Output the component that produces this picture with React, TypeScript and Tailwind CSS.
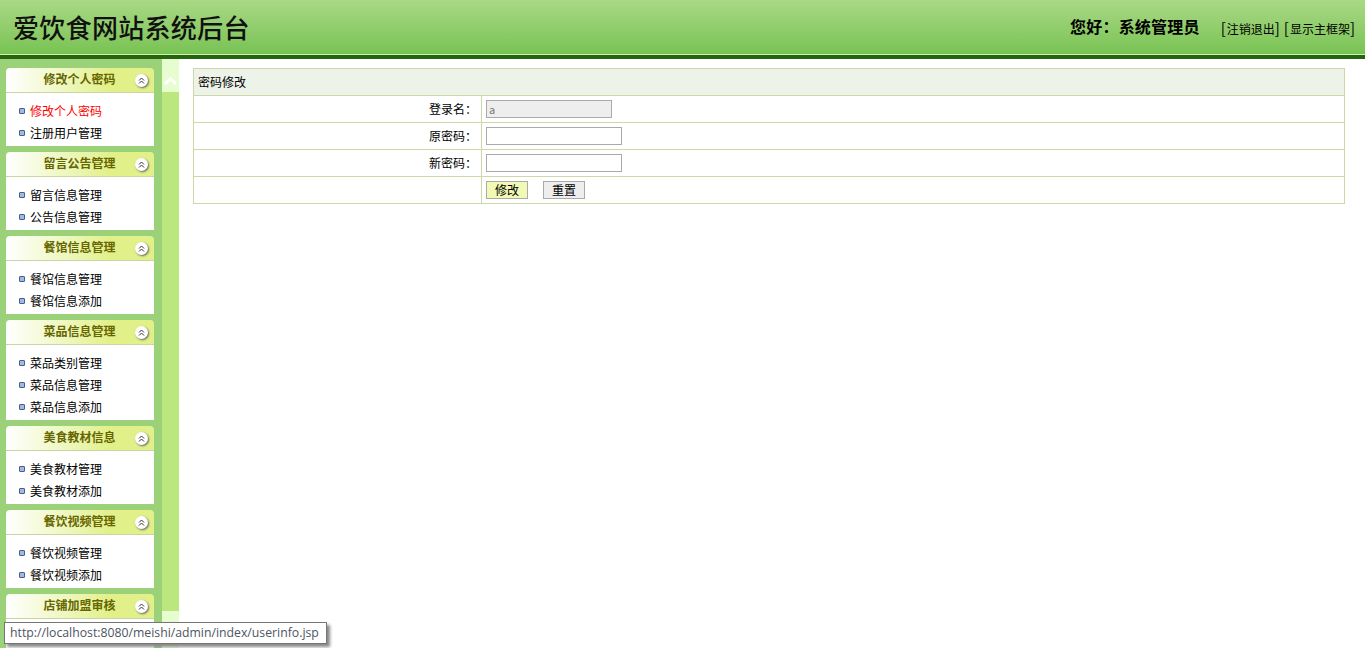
import React from "react";

const cjk = "font-['Noto_Sans_CJK_SC',sans-serif]";

const menus = [
  { title: "修改个人密码", items: ["修改个人密码", "注册用户管理"] },
  { title: "留言公告管理", items: ["留言信息管理", "公告信息管理"] },
  { title: "餐馆信息管理", items: ["餐馆信息管理", "餐馆信息添加"] },
  { title: "菜品信息管理", items: ["菜品类别管理", "菜品信息管理", "菜品信息添加"] },
  { title: "美食教材信息", items: ["美食教材管理", "美食教材添加"] },
  { title: "餐饮视频管理", items: ["餐饮视频管理", "餐饮视频添加"] },
  { title: "店铺加盟审核", items: [] },
];

function Chevrons() {
  return (
    <span className="ml-[2px] flex h-[13px] w-[13px] items-center justify-center rounded-full bg-white shadow-[1px_1px_2px_#666]">
      <svg width="9" height="9" viewBox="0 0 9 9" fill="none" stroke="#333" strokeWidth="1">
        <path d="M2 4.5 4.5 2 7 4.5M2 7.5 4.5 5 7 7.5" />
      </svg>
    </span>
  );
}

function MenuCard({ title, items, first }: { title: string; items: string[]; first: boolean }) {
  return (
    <div className="mb-[6px] w-[148px] shrink-0">
      <div className="flex h-[25px] items-center rounded-t-[4px] border-b border-[#c9d3a3] bg-gradient-to-r from-white to-[#e2f08a] to-70%">
        <span className="mb-[2px] w-[127px] pl-[20px] text-center text-[12px] font-bold leading-[22px] text-[#666600]">{title}</span>
        <Chevrons />
      </div>
      <ul className="min-h-[53px] bg-white pb-[2px] pt-[7px]">
        {items.map((item, i) => (
          <li key={item} className="flex h-[22px] items-center pl-[13px]">
            <span className="mr-[5px] h-[6px] w-[6px] rounded-[1px] border border-[#4b5d80] bg-[#9dbbe8]" />
            <span className={`text-[12px] leading-[22px] ${first && i === 0 ? "text-[#ff0000]" : "text-black"}`}>{item}</span>
          </li>
        ))}
      </ul>
    </div>
  );
}

function FormRow({ label, children }: { label: string; children: React.ReactNode }) {
  return (
    <div className="flex h-[27px] border-t border-[#cdd7aa]">
      <div className="w-[288px] border-r border-[#cdd7aa] pr-[4px] text-right text-[12px] leading-[26px] text-black">{label}</div>
      <div className="flex items-center pl-[4px]">{children}</div>
    </div>
  );
}

export default function App() {
  return (
    <div className={`flex h-[648px] w-[1365px] flex-col overflow-hidden bg-white ${cjk}`}>
      <header className="flex h-[54px] shrink-0 items-center justify-between bg-gradient-to-b from-[#aad885] to-[#78c353] pl-[13px] pr-[10px]">
        <h1 className="text-[26px] font-medium leading-[52px] tracking-[0.3px] text-[#111]">爱饮食网站系统后台</h1>
        <div className="flex items-center text-black">
          <span className="mr-[21px] pb-[2px] text-[16px] font-bold tracking-[0.2px]">您好：系统管理员</span>
          <span className="pt-[2px] text-[12px]"><span className="mr-px text-[15px]">[</span>注销退出<span className="text-[15px]">]</span></span>
          <span className="ml-[4px] pt-[2px] text-[12px]"><span className="mr-px text-[15px]">[</span>显示主框架<span className="text-[15px]">]</span></span>
        </div>
      </header>
      <div className="h-px shrink-0 bg-[#d3eeb0]" />
      <div className="h-[4px] shrink-0 bg-[#26650f]" />

      <div className="flex min-h-0 flex-1">
        <aside className="flex w-[162px] shrink-0 flex-col overflow-hidden bg-[#9bd279] pl-[6px] pt-[9px]">
          {menus.map((menu, i) => (
            <MenuCard key={menu.title} title={menu.title} items={menu.items} first={i === 0} />
          ))}
        </aside>

        <div className="flex w-[17px] shrink-0 flex-col justify-between bg-[#bce77f]">
          <div className="flex h-[33px] items-center justify-center bg-[#e6fdd0] pt-[11px]">
            <svg width="13" height="8" viewBox="0 0 13 8" fill="none" stroke="#ffffff" strokeWidth="3">
              <path d="M1 7 6.5 1.5 12 7" />
            </svg>
          </div>
          <div className="h-[37px] bg-[#e6fdd0]" />
        </div>

        <main className="min-w-0 flex-1 pl-[14px] pr-[20px] pt-[9px]">
          <div className="border border-[#cdd7aa]">
            <div className="h-[26px] bg-[#edf3e8] pl-[4px] text-[12px] leading-[25px] text-black">密码修改</div>
            <FormRow label="登录名：">
              <input readOnly disabled value="a" className="h-[18px] w-[126px] border border-[#aaa] bg-[#eeeeee] px-[2px] text-[11px] text-[#777]" />
            </FormRow>
            <FormRow label="原密码：">
              <input className="h-[18px] w-[136px] border border-[#aaa] bg-white" />
            </FormRow>
            <FormRow label="新密码：">
              <input className="h-[18px] w-[136px] border border-[#aaa] bg-white" />
            </FormRow>
            <FormRow label="">
              <button className="h-[18px] w-[42px] border border-[#aaa] bg-[#f2f9b5] text-[12px] leading-[16px] text-black">修改</button>
              <button className="ml-[15px] h-[18px] w-[42px] border border-[#aaa] bg-[#eeeeee] text-[12px] leading-[16px] text-black">重置</button>
            </FormRow>
          </div>
        </main>
      </div>

      <div className="absolute left-[4px] top-[622px] flex h-[22px] w-[323px] items-center border border-[#767676] bg-white pl-[5px] font-['Open_Sans',sans-serif] text-[12.25px] text-[#4d5560] shadow-[3px_3px_3px_#888]">
        http://localhost:8080/meishi/admin/index/userinfo.jsp
      </div>
    </div>
  );
}
